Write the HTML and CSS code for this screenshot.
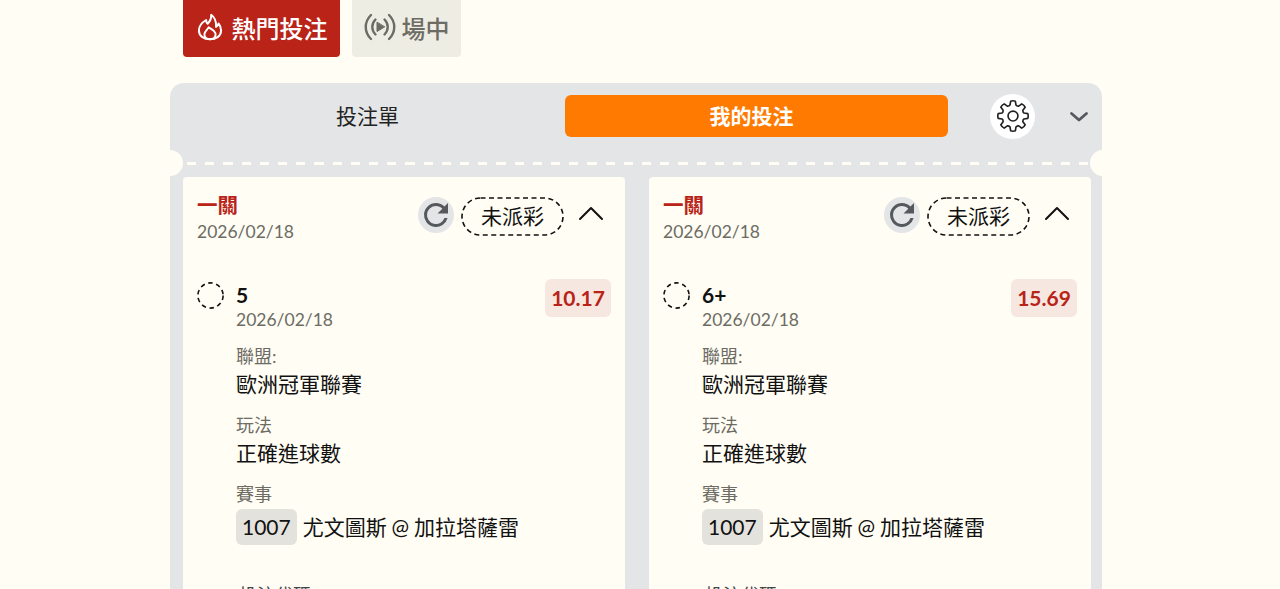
FILE: index.html
```html
<!DOCTYPE html>
<html lang="zh-Hant">

<head>
  <meta charset="UTF-8">
  <meta name="viewport" content="width=device-width, initial-scale=1.0">
  <title>投注單</title>
  <link rel="stylesheet" href="styles.css">
</head>

<body>
  <div class="page">
    <!-- 分類按鈕 -->
    <div class="tabs">
      <button class="tab tab-hot">
        <svg class="tab-icon" viewBox="0 0 24 24" fill="none" stroke="currentColor" stroke-width="1.7" stroke-linecap="round" stroke-linejoin="round">
          <path d="M13 1.500c.4 3.800-1.200 5.800-3 7.700-.9-.8-1.300-1.900-1.300-3.200C5.300 8 2.500 11 2.500 15c0 4.500 4 7.500 9.500 7.500s9.500-3 9.500-7.500c0-2.600-1-4.600-2.200-6-.3 1.400-1 2.400-2.100 2.900C17.500 7.500 16 3.700 13 1.500Z" />
          <path d="M12 22.500c-2.900 0-4.800-1.800-4.800-4.200 0-2.500 2.400-3.600 3.600-6 2.900 1.600 6 3.300 6 6 0 2.400-1.900 4.200-4.800 4.200Z" />
        </svg>
        熱門投注
      </button>
      <button class="tab tab-live">
        <svg class="tab-icon" viewBox="0 0 32 30" fill="none" stroke="currentColor" stroke-width="2.400" stroke-linecap="round">
          <path d="M7 3C0 10 0 20 7 27" />
          <path d="M11.500 7.500c-4.300 4.300-4.300 10.700 0 15" />
          <path d="M25 3c7 7 7 17 0 24" />
          <path d="M20.500 7.500c4.300 4.300 4.300 10.700 0 15" />
          <path d="M13 10.500v9l7.500-4.500Z" fill="currentColor" stroke-width="1" stroke-linejoin="round" />
        </svg>
        場中
      </button>
    </div>

    <div class="slip">
      <!-- 票頭 -->
      <div class="slip-head">
        <div class="slip-tab">投注單</div>
        <div class="slip-tab slip-tab-on">我的投注</div>
        <div class="gear">
          <svg viewBox="0 0 24 24" width="36" height="36" fill="none" stroke="#222" stroke-width="1.100" stroke-linejoin="round">
            <path d="M10.030 4.660 10.440 2.120Q12 1.600 13.560 2.120L13.970 4.660Q14.680 5.530 15.800 5.420L17.880 3.910Q19.350 4.650 20.090 6.120L18.580 8.200Q18.470 9.320 19.340 10.030L21.880 10.440Q22.400 12 21.880 13.560L19.340 13.970Q18.470 14.680 18.580 15.800L20.090 17.880Q19.350 19.350 17.880 20.090L15.800 18.580Q14.680 18.470 13.970 19.340L13.560 21.880Q12 22.400 10.440 21.880L10.030 19.340Q9.320 18.470 8.200 18.580L6.120 20.090Q4.650 19.350 3.910 17.880L5.420 15.800Q5.530 14.680 4.660 13.970L2.120 13.560Q1.600 12 2.120 10.440L4.660 10.030Q5.530 9.320 5.420 8.200L3.910 6.120Q4.650 4.650 6.120 3.910L8.200 5.420Q9.320 5.530 10.030 4.660Z" />
            <circle cx="12" cy="12" r="3.300" />
          </svg>
        </div>
        <svg class="fold" viewBox="0 0 20 12" width="20" height="12" fill="none" stroke="#55595e" stroke-width="2.800" stroke-linecap="round" stroke-linejoin="round">
          <path d="M2.500 2.500 10 9l7.500-6.500" />
        </svg>
      </div>

      <!-- 虛線撕口 -->
      <div class="tear"></div>

      <div class="cards">
        <div class="card">
          <div class="card-top">
            <div class="card-title">
              <div class="pass">一關</div>
              <div class="date">2026/02/18</div>
            </div>
            <div class="refresh">
              <svg viewBox="0 0 24 24" width="36" height="36" fill="#55595e">
                <path d="M17.650 6.350A7.958 7.958 0 0 0 12 4a8 8 0 1 0 7.730 10h-2.080A6 6 0 1 1 12 6c1.660 0 3.140.69 4.220 1.780L13 11h7V4l-2.350 2.350Z" />
              </svg>
            </div>
            <div class="status">
              <svg class="status-line" viewBox="0 0 103 39" width="103" height="39" fill="none" stroke="#111" stroke-width="1.600" stroke-dasharray="5 3.500">
                <rect x="1" y="1" width="101" height="37" rx="18.500" />
              </svg>
              未派彩
            </div>
            <svg class="collapse" viewBox="0 0 26 16" width="26" height="16" fill="none" stroke="#111" stroke-width="2" stroke-linecap="round" stroke-linejoin="round">
              <path d="M2 14 13 3l11 11" />
            </svg>
          </div>
          <div class="bet">
            <svg class="radio" viewBox="0 0 27 27" width="27" height="27" fill="none" stroke="#111" stroke-width="1.600" stroke-dasharray="4.500 3.600">
              <circle cx="13.500" cy="13.500" r="12.600" />
            </svg>
            <div class="bet-body">
              <div class="bet-head">
                <div>
                  <div class="pick">5</div>
                  <div class="date">2026/02/18</div>
                </div>
                <div class="odds">10.17</div>
              </div>
              <div class="field-label">聯盟:</div>
              <div class="field-value">歐洲冠軍聯賽</div>
              <div class="field-label">玩法</div>
              <div class="field-value">正確進球數</div>
              <div class="field-label">賽事</div>
              <div class="match"><span class="match-no">1007</span>尤文圖斯 @ 加拉塔薩雷</div>
              <div class="code">投注代碼: 311400115</div>
            </div>
          </div>
        </div>

        <div class="card">
          <div class="card-top">
            <div class="card-title">
              <div class="pass">一關</div>
              <div class="date">2026/02/18</div>
            </div>
            <div class="refresh">
              <svg viewBox="0 0 24 24" width="36" height="36" fill="#55595e">
                <path d="M17.650 6.350A7.958 7.958 0 0 0 12 4a8 8 0 1 0 7.730 10h-2.080A6 6 0 1 1 12 6c1.660 0 3.140.69 4.220 1.780L13 11h7V4l-2.350 2.350Z" />
              </svg>
            </div>
            <div class="status">
              <svg class="status-line" viewBox="0 0 103 39" width="103" height="39" fill="none" stroke="#111" stroke-width="1.600" stroke-dasharray="5 3.500">
                <rect x="1" y="1" width="101" height="37" rx="18.500" />
              </svg>
              未派彩
            </div>
            <svg class="collapse" viewBox="0 0 26 16" width="26" height="16" fill="none" stroke="#111" stroke-width="2" stroke-linecap="round" stroke-linejoin="round">
              <path d="M2 14 13 3l11 11" />
            </svg>
          </div>
          <div class="bet">
            <svg class="radio" viewBox="0 0 27 27" width="27" height="27" fill="none" stroke="#111" stroke-width="1.600" stroke-dasharray="4.500 3.600">
              <circle cx="13.500" cy="13.500" r="12.600" />
            </svg>
            <div class="bet-body">
              <div class="bet-head">
                <div>
                  <div class="pick">6+</div>
                  <div class="date">2026/02/18</div>
                </div>
                <div class="odds">15.69</div>
              </div>
              <div class="field-label">聯盟:</div>
              <div class="field-value">歐洲冠軍聯賽</div>
              <div class="field-label">玩法</div>
              <div class="field-value">正確進球數</div>
              <div class="field-label">賽事</div>
              <div class="match"><span class="match-no">1007</span>尤文圖斯 @ 加拉塔薩雷</div>
              <div class="code">投注代碼: 311400550</div>
            </div>
          </div>
        </div>
      </div>
    </div>
  </div>
</body>

</html>
```

FILE: styles.css
```css
html,
body {
  height: 100%;
  margin: 0;
  overflow: hidden;
  background: #fffdf4;
}

body {
  font-family: Lato, "Noto Sans CJK TC", sans-serif;
  color: #111;
  padding-right: 8px;
  box-sizing: border-box;
}

.page {
  width: 932px;
  margin: 0 auto;
  height: 589px;
  overflow: hidden;
}

.tabs {
  display: flex;
  gap: 12px;
  margin: -3px 0 26px 13px;
  height: 60px;
}

.tab {
  display: flex;
  align-items: center;
  justify-content: center;
  gap: 8px;
  border: 0;
  border-radius: 4px;
  font-family: inherit;
  font-size: 24px;
  padding: 0;
}

.tab-hot {
  width: 157px;
  background: #b92318;
  color: #fff;
  font-weight: 500;
}

.tab-live {
  width: 109px;
  gap: 6px;
  background: #eeede4;
  color: #6d6c64;
  font-weight: 500;
}

.tab-icon {
  width: 28px;
  height: 28px;
}

.tab-live .tab-icon {
  width: 32px;
  height: 30px;
}

.slip {
  background: #e3e5e7;
  border-radius: 14px 14px 0 0;
  height: 520px;
}

.slip-head {
  display: flex;
  align-items: center;
  height: 66px;
  padding: 0 13px 2px 12px;
}

.slip-tab {
  width: 371px;
  height: 42px;
  line-height: 42px;
  text-align: center;
  border-radius: 6px;
  font-size: 21px;
  color: #222;
}

.slip-tab-on {
  width: 383px;
  box-sizing: border-box;
  padding-right: 10px;
  background: #ff7a00;
  color: #fff;
  font-weight: 700;
  margin-right: 42px;
  margin-left: 12px;
}

.gear {
  width: 45px;
  height: 45px;
  border-radius: 50%;
  background: #fff;
  display: flex;
  align-items: center;
  justify-content: center;
  flex-shrink: 0;
}

.fold {
  margin: 2px 0 0 34px;
  flex-shrink: 0;
}

.tear {
  height: 26px;
  margin: 0 12px 0 13px;
  position: relative;
  background: repeating-linear-gradient(90deg, transparent 0 4px, #fffdf4 4px 13.200px, transparent 13.200px 18.200px) 0 11px / 100% 3px no-repeat;
}

.tear::before,
.tear::after {
  content: "";
  position: absolute;
  top: -1px;
  width: 26px;
  height: 26px;
  border-radius: 50%;
  background: #fffdf4;
}

.tear::before {
  left: -26px;
}

.tear::after {
  right: -26px;
}

.cards {
  display: flex;
  gap: 24px;
  margin: 0 11px 0 13px;
}

.card {
  width: 442px;
  background: #fffdf4;
  border-radius: 4px 4px 0 0;
  padding: 15px 14px 0;
  box-sizing: border-box;
  height: 420px;
  overflow: hidden;
}

.card-top {
  display: flex;
  align-items: center;
  height: 50px;
}

.card-title {
  flex: 1;
}

.pass {
  color: #b92318;
  font-size: 20.500px;
  font-weight: 700;
  line-height: 26px;
  margin-bottom: 3px;
}

.date {
  color: #6d6c64;
  font-size: 17.500px;
  line-height: 22px;
}

.refresh {
  width: 36px;
  height: 36px;
  border-radius: 50%;
  background: #e3e5e7;
  display: flex;
  align-items: center;
  justify-content: center;
  margin-bottom: 5px;
}

.status {
  position: relative;
  width: 103px;
  height: 39px;
  margin: 0 0 2px 7px;
  text-align: center;
  line-height: 37px;
  font-size: 21px;
}

.status-line {
  position: absolute;
  top: 0;
  left: 0;
}

.collapse {
  margin: 0 7px 9px 14px;
}

.bet {
  display: flex;
  gap: 12px;
  margin-top: 37px;
}

.radio {
  flex-shrink: 0;
  margin-top: 3px;
}

.bet-body {
  flex: 1;
}

.bet-head {
  display: flex;
  justify-content: space-between;
  align-items: flex-start;
  margin-bottom: 13px;
}

.bet-head .date {
  margin-top: 1px;
}

.pick {
  font-size: 21px;
  font-weight: 700;
  line-height: 26px;
  margin-top: 3px;
}

.odds {
  width: 66px;
  height: 38px;
  line-height: 38px;
  text-align: center;
  background: #f7e7e1;
  color: #b92318;
  font-size: 21px;
  font-weight: 700;
  border-radius: 6px;
}

.field-label {
  color: #6d6c64;
  font-size: 18px;
  line-height: 24px;
}

.field-value {
  font-size: 21px;
  line-height: 32px;
  margin-bottom: 13px;
}

.match {
  display: flex;
  align-items: center;
  font-size: 21px;
  line-height: 36px;
  margin-top: 3px;
  word-spacing: -0.500px;
}

.match-no {
  background: #e4e2dc;
  border-radius: 6px;
  padding: 0 6px;
  margin-right: 6px;
}

.code {
  color: #444;
  font-size: 18px;
  margin: 36px 0 0 3px;
}
```
